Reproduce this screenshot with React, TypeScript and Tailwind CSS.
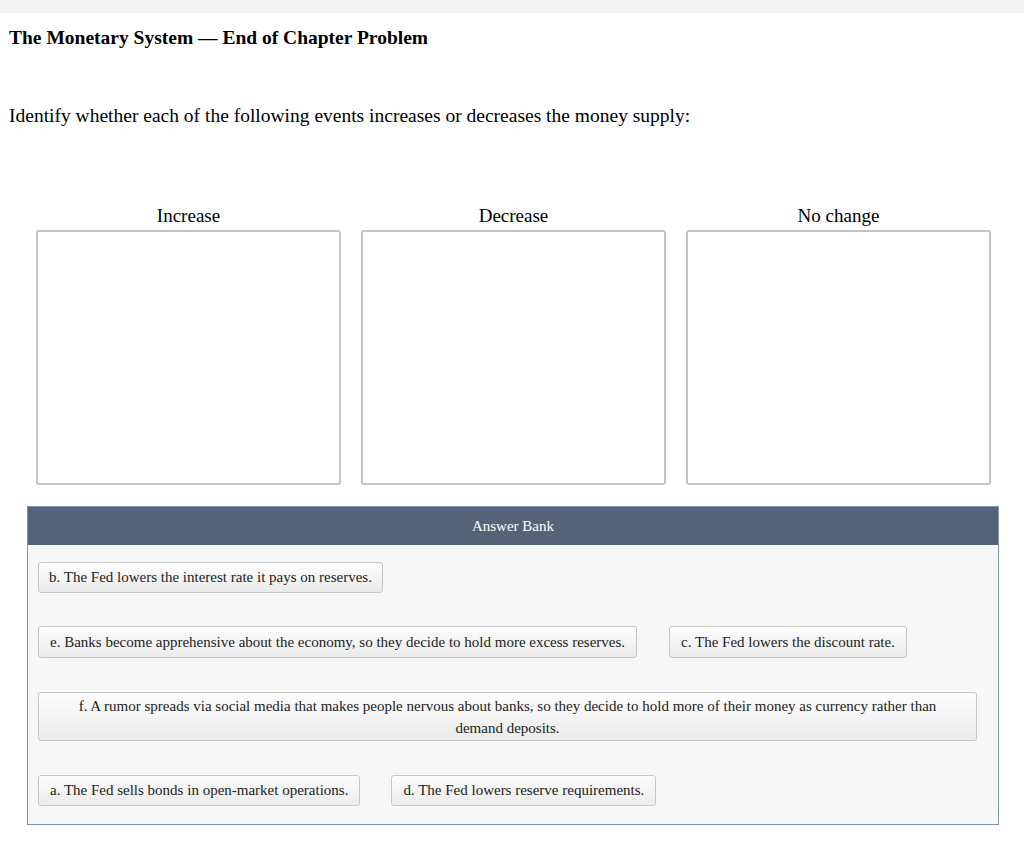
import React from "react";

const serif = { fontFamily: '"Liberation Serif", "Times New Roman", serif' };

function Item({ children, className = "" }: { children: React.ReactNode; className?: string }) {
  return (
    <div
      className={`rounded-[3px] border border-[#c6c6c6] bg-gradient-to-b from-[#fdfdfd] to-[#ebebeb] text-[15px] text-[#222] ${className}`}
    >
      {children}
    </div>
  );
}

export default function App() {
  return (
    <div className="w-[1024px] h-[848px] bg-white text-black" style={serif}>
      <div className="h-[13px] bg-[#f2f2f2]" />
      <div className="pl-[9px] pt-[13px]">
        <h1 className="text-[19.5px] font-bold leading-[24px]">The Monetary System — End of Chapter Problem</h1>
        <p className="mt-[54px] text-[19.5px] leading-[24px]">
          Identify whether each of the following events increases or decreases the money supply:
        </p>
      </div>
      <div className="mt-[76px] flex gap-[20px] pl-[36px]">
        {["Increase", "Decrease", "No change"].map((t) => (
          <div key={t} className="w-[305px]">
            <div className="text-center text-[19px] leading-[24px]">{t}</div>
            <div className="mt-[2px] h-[255px] rounded-[3px] border-2 border-[#c3c3c3] bg-white" />
          </div>
        ))}
      </div>
      <div className="ml-[27px] mt-[21px] w-[972px] border border-[#8494ab] bg-[#f7f7f7]">
        <div className="flex h-[38px] items-center justify-center bg-[#546378] text-[15px] text-white">
          Answer Bank
        </div>
        <div className="flex flex-col pb-[18px] pl-[10px] pr-[21px] pt-[17px]">
          <div className="flex">
            <Item className="px-[10px] py-[5px] leading-[19px]">b. The Fed lowers the interest rate it pays on reserves.</Item>
          </div>
          <div className="mt-[33px] flex gap-x-[32px]">
            <Item className="px-[11px] py-[5px] leading-[20px]">e. Banks become apprehensive about the economy, so they decide to hold more excess reserves.</Item>
            <Item className="px-[11px] py-[5px] leading-[20px]">c. The Fed lowers the discount rate.</Item>
          </div>
          <div className="mt-[34px] flex">
            <Item className="w-full px-[32px] py-[1.5px] text-center leading-[22px]">
              f. A rumor spreads via social media that makes people nervous about banks, so they decide to hold more of their money as currency rather than demand deposits.
            </Item>
          </div>
          <div className="mt-[34px] flex gap-x-[31px]">
            <Item className="px-[11px] py-[5px] leading-[19px]">a. The Fed sells bonds in open-market operations.</Item>
            <Item className="px-[11px] py-[5px] leading-[19px]">d. The Fed lowers reserve requirements.</Item>
          </div>
        </div>
      </div>
    </div>
  );
}
